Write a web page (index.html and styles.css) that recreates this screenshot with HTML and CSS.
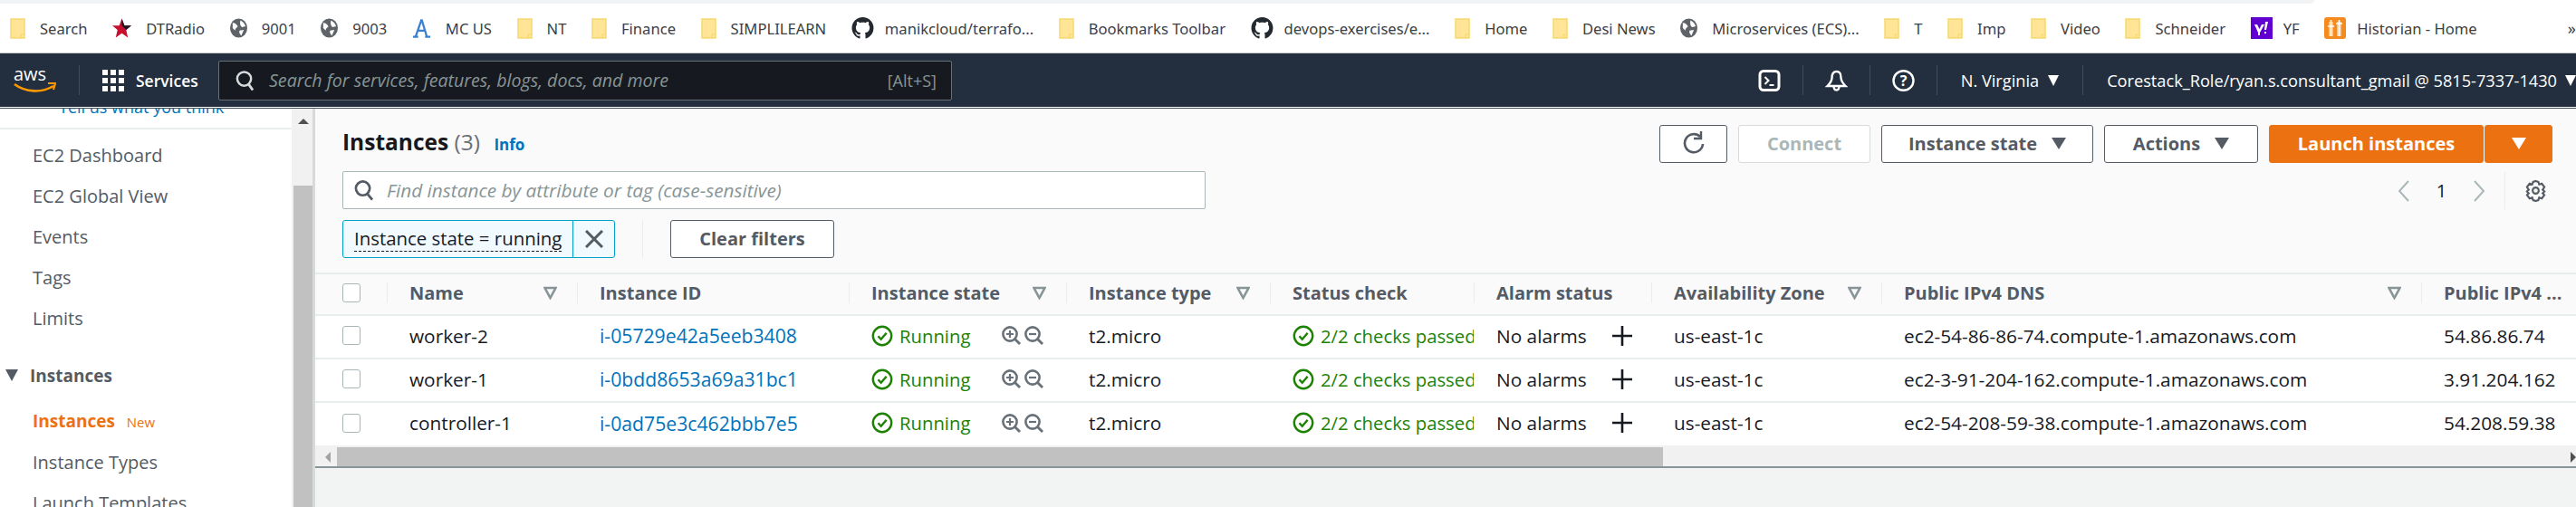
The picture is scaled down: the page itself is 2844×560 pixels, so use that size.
FILE: index.html
```html
<!DOCTYPE html>
<html lang="en">
  <head>
    <meta charset="UTF-8" />
    <title>Instances | EC2 Management Console</title>
    <link rel="stylesheet" href="styles.css">
  </head>
  <body>
    <svg class="defs" width="0" height="0">
      <symbol id="folder" viewBox="0 0 17 23">
        <path d="M1 1h15v21H1z" fill="#ffe595" stroke="#f6d76f" stroke-width="1.5"/>
        <path d="M12 22v-4h3" fill="none" stroke="#f6d76f" stroke-width="1.2"/>
      </symbol>
      <symbol id="globe" viewBox="0 0 20 22">
        <ellipse cx="10" cy="11" rx="10" ry="11" fill="#5f6368"/>
        <path d="M3 5c3 0 5 2 6 4-1 2-3 2-3 5l-3-3zM12 2c2 1 5 3 6 7l-4 1c-2-1-3-4-2-8zM11 14l5-1-3 7c-1-2-3-3-2-6z" fill="#fff"/>
      </symbol>
      <symbol id="github" viewBox="0 0 16 16">
        <path fill="#24292f" d="M8 0C3.58 0 0 3.58 0 8c0 3.54 2.29 6.53 5.47 7.59.4.07.55-.17.55-.38 0-.19-.01-.82-.01-1.49-2.01.37-2.53-.49-2.69-.94-.09-.23-.48-.94-.82-1.13-.28-.15-.68-.52-.01-.53.63-.01 1.08.58 1.23.82.72 1.21 1.87.87 2.33.66.07-.52.28-.87.51-1.07-1.78-.2-3.64-.89-3.64-3.95 0-.87.31-1.59.82-2.15-.08-.2-.36-1.02.08-2.12 0 0 .67-.21 2.2.82.64-.18 1.32-.27 2-.27.68 0 1.36.09 2 .27 1.53-1.04 2.2-.82 2.2-.82.44 1.1.16 1.92.08 2.12.51.56.82 1.27.82 2.15 0 3.07-1.87 3.75-3.65 3.95.29.25.54.73.54 1.48 0 1.07-.01 1.93-.01 2.2 0 .21.15.46.55.38A8.013 8.013 0 0016 8c0-4.42-3.58-8-8-8z"/>
      </symbol>
      <symbol id="check" viewBox="0 0 24 24">
        <circle cx="12" cy="12" r="10.2" fill="none" stroke="#1d8102" stroke-width="2.4"/>
        <path d="M7.5 12.2l3.2 3.6 6-7" fill="none" stroke="#1d8102" stroke-width="2.4"/>
      </symbol>
      <symbol id="zoomin" viewBox="0 0 21 21">
        <circle cx="9" cy="9" r="7.6" fill="none" stroke="#687078" stroke-width="2.6"/>
        <path d="M14.5 14.5l5.5 5.5" stroke="#687078" stroke-width="2.8"/>
        <path d="M5 9h8M9 5v8" stroke="#687078" stroke-width="2.2"/>
      </symbol>
      <symbol id="zoomout" viewBox="0 0 21 21">
        <circle cx="9" cy="9" r="7.6" fill="none" stroke="#687078" stroke-width="2.6"/>
        <path d="M14.5 14.5l5.5 5.5" stroke="#687078" stroke-width="2.8"/>
        <path d="M5 9h8" stroke="#687078" stroke-width="2.2"/>
      </symbol>
      <symbol id="plus" viewBox="0 0 22 22">
        <path d="M0 11h22M11 0v22" stroke="#16191f" stroke-width="2.6"/>
      </symbol>
      <symbol id="filter" viewBox="0 0 15 15">
        <path d="M1.5 2h12l-6 11z" fill="none" stroke="#879596" stroke-width="2.6"/>
      </symbol>
    </svg>

    <div class="tabstrip"><div class="tabstrip-fill"></div></div>

    <div class="bookmarks">
      <a class="bm"><svg class="bm-folder"><use href="#folder"/></svg>Search</a>
      <a class="bm"><svg class="bm-icon" viewBox="0 0 22 22"><path d="M11 0l3 8h8l-6 5 2 9-7-5-7 5 2-9-6-5h8z" fill="#c8102e"/><path d="M11 0l3 8h8l-6 5-5-5z" fill="#16191f"/></svg>DTRadio</a>
      <a class="bm"><svg class="bm-globe"><use href="#globe"/></svg>9001</a>
      <a class="bm"><svg class="bm-globe"><use href="#globe"/></svg>9003</a>
      <a class="bm"><svg class="bm-icon" viewBox="0 0 22 22"><path d="M11 1L4 21M11 1l6 20M1 21h6M15 21h6M6 14h10" fill="none" stroke="#3c7fd0" stroke-width="2.4"/></svg>MC US</a>
      <a class="bm"><svg class="bm-folder"><use href="#folder"/></svg>NT</a>
      <a class="bm"><svg class="bm-folder"><use href="#folder"/></svg>Finance</a>
      <a class="bm"><svg class="bm-folder"><use href="#folder"/></svg>SIMPLILEARN</a>
      <a class="bm"><svg class="bm-hub"><use href="#github"/></svg>manikcloud/terrafo...</a>
      <a class="bm"><svg class="bm-folder"><use href="#folder"/></svg>Bookmarks Toolbar</a>
      <a class="bm"><svg class="bm-hub"><use href="#github"/></svg>devops-exercises/e...</a>
      <a class="bm"><svg class="bm-folder"><use href="#folder"/></svg>Home</a>
      <a class="bm"><svg class="bm-folder"><use href="#folder"/></svg>Desi News</a>
      <a class="bm"><svg class="bm-globe"><use href="#globe"/></svg>Microservices (ECS)...</a>
      <a class="bm"><svg class="bm-folder"><use href="#folder"/></svg>T</a>
      <a class="bm"><svg class="bm-folder"><use href="#folder"/></svg>Imp</a>
      <a class="bm"><svg class="bm-folder"><use href="#folder"/></svg>Video</a>
      <a class="bm"><svg class="bm-folder"><use href="#folder"/></svg>Schneider</a>
      <a class="bm"><svg class="bm-icon bm-yahoo" viewBox="0 0 24 24"><rect width="24" height="24" fill="#6001d2"/><path d="M4 8h3l2.500 5L12 8h3l-5 9v3H8v-3zM16 5h3l-2 9h-2zM15 16h2v2h-2z" fill="#fff"/></svg>YF</a>
      <a class="bm"><svg class="bm-icon bm-hist" viewBox="0 0 24 24"><rect width="24" height="24" rx="3" fill="#f58a1f"/><path d="M5 5h5v16H5zM14 5h5v16h-5z" fill="#fbc27e"/><path d="M7.500 3v18M16.500 3v18M4 10h7M13 7h7" stroke="#fff" stroke-width="1.600"/></svg>Historian - Home</a>
      <span class="bm-more">»</span>
    </div>

    <header class="topnav">
      <svg class="aws-logo" viewBox="0 0 47 29">
        <text x="0" y="15" class="aws-word">aws</text>
        <path d="M1 19c12 9 30 10 43 2" fill="none" stroke="#f90" stroke-width="2.600"/>
        <path d="M38 18l8 0-2 7" fill="none" stroke="#f90" stroke-width="2.200"/>
      </svg>
      <span class="nav-sep nav-sep-logo"></span>
      <svg class="grid-icon" viewBox="0 0 24 24" fill="#fff">
        <rect width="6" height="6"/><rect x="9" width="6" height="6"/><rect x="18" width="6" height="6"/>
        <rect y="9" width="6" height="6"/><rect x="9" y="9" width="6" height="6"/><rect x="18" y="9" width="6" height="6"/>
        <rect y="18" width="6" height="6"/><rect x="9" y="18" width="6" height="6"/><rect x="18" y="18" width="6" height="6"/>
      </svg>
      <span class="services">Services</span>
      <div class="nav-search">
        <svg class="nav-search-icon" viewBox="0 0 22 24"><circle cx="10" cy="10" r="8" fill="none" stroke="#d5dbdb" stroke-width="2.600"/><path d="M15 16l5 7" stroke="#d5dbdb" stroke-width="3"/></svg>
        <span class="nav-search-text">Search for services, features, blogs, docs, and more</span>
        <span class="nav-search-key">[Alt+S]</span>
      </div>
      <div class="nav-right">
        <svg class="nav-icon" viewBox="0 0 24 24"><rect x="1.500" y="1.500" width="21" height="21" rx="4" fill="none" stroke="#fff" stroke-width="3"/><path d="M7 8l4 4-4 4M12 17h5" fill="none" stroke="#fff" stroke-width="2"/></svg>
        <span class="nav-sep"></span>
        <svg class="nav-icon" viewBox="0 0 25 24"><path d="M12.500 2c-4 0-5 3-5 7 0 4-2 6-5 9h20c-3-3-5-5-5-9 0-4-1-7-5-7zM9.500 18c0 6 6 6 6 0" fill="none" stroke="#fff" stroke-width="2.400"/></svg>
        <span class="nav-sep"></span>
        <svg class="nav-icon" viewBox="0 0 25 24"><ellipse cx="12.500" cy="12" rx="11" ry="10.800" fill="none" stroke="#fff" stroke-width="2.400"/><text x="12.500" y="18" class="help-mark">?</text></svg>
        <span class="nav-sep"></span>
        <span class="nav-text region">N. Virginia</span>
        <span class="nav-caret"></span>
        <span class="nav-sep nav-sep-acct"></span>
        <span class="nav-text account">Corestack_Role/ryan.s.consultant_gmail @ 5815-7337-1430</span>
        <span class="nav-caret nav-caret-acct"></span>
      </div>
    </header>

    <div class="rule"></div>

    <div class="console">
      <aside class="sidebar">
        <div class="side-nav">
          <div class="feedback"><a>Tell us what you think</a></div>
          <ul class="side-list">
            <li>EC2 Dashboard</li>
            <li>EC2 Global View</li>
            <li>Events</li>
            <li>Tags</li>
            <li>Limits</li>
          </ul>
          <div class="side-section"><span class="side-tri"></span>Instances</div>
          <ul class="side-list">
            <li class="active">Instances <em>New</em></li>
            <li>Instance Types</li>
            <li>Launch Templates</li>
          </ul>
        </div>
        <div class="side-scroll">
          <div class="side-arrow"></div>
          <div class="side-thumb"></div>
        </div>
      </aside>

      <main class="main">
        <section class="panel">
          <div class="panel-left">
            <h1 class="title">Instances <span class="count">(3)</span> <a class="info">Info</a></h1>
            <div class="find">
              <svg class="find-icon" viewBox="0 0 22 24"><circle cx="10" cy="10" r="8" fill="none" stroke="#545b64" stroke-width="2.800"/><path d="M15 16l6 7" stroke="#545b64" stroke-width="3"/></svg>
              <span>Find instance by attribute or tag (case-sensitive)</span>
            </div>
            <div class="filters">
              <div class="token">
                <span class="token-label">Instance state = running</span>
                <span class="token-close"><svg viewBox="0 0 20 20"><path d="M1 1l18 18M19 1L1 19" stroke="#545b64" stroke-width="3"/></svg></span>
              </div>
              <span class="filters-sep"></span>
              <button class="btn clear">Clear filters</button>
            </div>
          </div>
          <div class="panel-right">
            <div class="actions">
              <button class="btn refresh"><svg viewBox="0 0 24 26"><path d="M19 6a10 10 0 1 0 3 8" fill="none" stroke="#545b64" stroke-width="2.600"/><path d="M20 0v8h-8" fill="none" stroke="#545b64" stroke-width="2.400"/></svg></button>
              <button class="btn connect" disabled>Connect</button>
              <button class="btn state">Instance state<span class="caret"></span></button>
              <button class="btn acts">Actions<span class="caret"></span></button>
              <div class="launch">
                <button class="btn primary">Launch instances</button>
                <button class="btn primary primary-caret"><span class="caret caret-white"></span></button>
              </div>
            </div>
            <div class="pager">
              <svg class="chev" viewBox="0 0 14 24"><path d="M12 1L2 12l10 11" fill="none" stroke="#aab7b8" stroke-width="2"/></svg>
              <span class="page-num">1</span>
              <svg class="chev" viewBox="0 0 14 24"><path d="M2 1l10 11L2 23" fill="none" stroke="#aab7b8" stroke-width="2"/></svg>
              <span class="pager-sep"></span>
              <svg class="gear" viewBox="0 0 26 26"><path d="M13 2l3 1 1 3 3-1 3 4-2 3 2 2-2 2 2 2-3 4-3-1-1 3-3 1-3-1-1-3-3 1-3-4 2-2-2-2 2-2-2-3 3-4 3 1 1-3z" fill="none" stroke="#545b64" stroke-width="2.200"/><circle cx="13" cy="13" r="3.500" fill="none" stroke="#545b64" stroke-width="2.200"/></svg>
            </div>
          </div>
        </section>

        <table class="grid">
          <colgroup>
            <col class="c-check"><col class="c-name"><col class="c-id"><col class="c-state"><col class="c-type">
            <col class="c-status"><col class="c-alarm"><col class="c-az"><col class="c-dns"><col class="c-ip">
          </colgroup>
          <thead>
            <tr>
              <th class="cell-check"><span class="box"></span></th>
              <th><div class="th-in"><span>Name</span><svg class="flt"><use href="#filter"/></svg></div></th>
              <th><div class="th-in"><span>Instance ID</span></div></th>
              <th><div class="th-in"><span>Instance state</span><svg class="flt"><use href="#filter"/></svg></div></th>
              <th><div class="th-in"><span>Instance type</span><svg class="flt"><use href="#filter"/></svg></div></th>
              <th><div class="th-in"><span>Status check</span></div></th>
              <th><div class="th-in"><span>Alarm status</span></div></th>
              <th><div class="th-in"><span>Availability Zone</span><svg class="flt"><use href="#filter"/></svg></div></th>
              <th><div class="th-in"><span>Public IPv4 DNS</span><svg class="flt"><use href="#filter"/></svg></div></th>
              <th><div class="th-in"><span>Public IPv4 ...</span></div></th>
            </tr>
          </thead>
          <tbody>
            <tr>
              <td class="cell-check"><span class="box"></span></td>
              <td>worker-2</td>
              <td><a class="link">i-05729e42a5eeb3408</a></td>
              <td><div class="status"><svg class="ok"><use href="#check"/></svg><span class="green">Running</span><svg class="mag mag-first"><use href="#zoomin"/></svg><svg class="mag"><use href="#zoomout"/></svg></div></td>
              <td>t2.micro</td>
              <td><div class="status"><svg class="ok"><use href="#check"/></svg><span class="green">2/2 checks passed</span></div></td>
              <td><div class="alarm"><span>No alarms</span><svg class="plus"><use href="#plus"/></svg></div></td>
              <td>us-east-1c</td>
              <td>ec2-54-86-86-74.compute-1.amazonaws.com</td>
              <td>54.86.86.74</td>
            </tr>
            <tr>
              <td class="cell-check"><span class="box"></span></td>
              <td>worker-1</td>
              <td><a class="link">i-0bdd8653a69a31bc1</a></td>
              <td><div class="status"><svg class="ok"><use href="#check"/></svg><span class="green">Running</span><svg class="mag mag-first"><use href="#zoomin"/></svg><svg class="mag"><use href="#zoomout"/></svg></div></td>
              <td>t2.micro</td>
              <td><div class="status"><svg class="ok"><use href="#check"/></svg><span class="green">2/2 checks passed</span></div></td>
              <td><div class="alarm"><span>No alarms</span><svg class="plus"><use href="#plus"/></svg></div></td>
              <td>us-east-1c</td>
              <td>ec2-3-91-204-162.compute-1.amazonaws.com</td>
              <td>3.91.204.162</td>
            </tr>
            <tr>
              <td class="cell-check"><span class="box"></span></td>
              <td>controller-1</td>
              <td><a class="link">i-0ad75e3c462bbb7e5</a></td>
              <td><div class="status"><svg class="ok"><use href="#check"/></svg><span class="green">Running</span><svg class="mag mag-first"><use href="#zoomin"/></svg><svg class="mag"><use href="#zoomout"/></svg></div></td>
              <td>t2.micro</td>
              <td><div class="status"><svg class="ok"><use href="#check"/></svg><span class="green">2/2 checks passed</span></div></td>
              <td><div class="alarm"><span>No alarms</span><svg class="plus"><use href="#plus"/></svg></div></td>
              <td>us-east-1c</td>
              <td>ec2-54-208-59-38.compute-1.amazonaws.com</td>
              <td>54.208.59.38</td>
            </tr>
          </tbody>
        </table>

        <div class="hscroll">
          <span class="hs-arrow hs-left"></span>
          <div class="hs-thumb"></div>
          <span class="hs-arrow hs-right"></span>
        </div>
        <div class="footer-space"></div>
      </main>
    </div>
  </body>
</html>
```

FILE: styles.css
```css
* {
  box-sizing: border-box;
}

html,
body {
  margin: 0;
  height: 560px;
  overflow: hidden;
}

body {
  display: flex;
  flex-direction: column;
  font-family: "Open Sans", "Noto Sans", sans-serif;
  font-size: 20px;
  color: #16191f;
  background-color: #fff;
}

.defs {
  display: block;
  height: 0;
}

/* browser chrome */

.tabstrip {
  height: 4px;
  flex: none;
  background-color: #fff;
}

.tabstrip-fill {
  width: 2555px;
  height: 4px;
  background-color: #f1f3f4;
  border-radius: 0 0 8px 0;
}

.bookmarks {
  height: 55px;
  flex: none;
  display: flex;
  align-items: center;
  gap: 27.6px;
  padding-left: 11px;
  background-color: #fff;
  border-bottom: 1px solid #ccc;
  font-family: "Noto Sans", sans-serif;
  font-size: 16.6px;
  color: #3c4043;
  white-space: nowrap;
}

.bm {
  display: flex;
  align-items: center;
  gap: 16px;
}

.bm-folder {
  width: 17px;
  height: 23px;
}

.bm-globe {
  width: 19px;
  height: 22px;
}

.bm-hub {
  width: 25px;
  height: 24px;
  margin-right: -4px;
}

.bm-icon {
  width: 21px;
  height: 22px;
}

.bm-yahoo,
.bm-hist {
  width: 24px;
  height: 24px;
  margin-right: -4px;
}

.bm-more {
  margin-left: auto;
  margin-right: 0;
  font-size: 18px;
}

/* aws nav */

.topnav {
  height: 59px;
  flex: none;
  display: flex;
  align-items: center;
  background-color: #232f3e;
  color: #fff;
  padding-left: 15px;
}

.aws-logo {
  width: 47px;
  height: 29px;
}

.aws-word {
  font-family: "Open Sans", sans-serif;
  font-size: 20px;
  fill: #fff;
}

.nav-sep {
  width: 1px;
  height: 33px;
  flex: none;
  background-color: #414d5c;
}

.nav-sep-logo {
  margin-left: 25px;
}

.grid-icon {
  width: 24px;
  height: 24px;
  margin-left: 25px;
}

.services {
  width: 66px;
  margin-left: 13px;
  font-size: 17.5px;
  font-weight: 600;
  white-space: nowrap;
}

.nav-search {
  width: 810px;
  height: 44px;
  margin-left: 25px;
  display: flex;
  align-items: center;
  padding: 0 16px 0 18px;
  background-color: #16191f;
  border: 1px solid #687078;
  border-radius: 2px;
  color: #879596;
  font-size: 19.6px;
}

.nav-search-icon {
  width: 21px;
  height: 24px;
  flex: none;
}

.nav-search-text {
  margin-left: 16px;
  font-style: italic;
}

.nav-search-key {
  margin-left: auto;
  font-size: 18px;
}

.nav-right {
  margin-left: auto;
  display: flex;
  align-items: center;
}

.nav-icon {
  width: 25px;
  height: 24px;
  flex: none;
  margin: 0 24px;
}

.help-mark {
  font-family: "Open Sans", sans-serif;
  font-size: 16px;
  font-weight: 700;
  fill: #fff;
  text-anchor: middle;
}

.nav-text {
  font-size: 18.2px;
  white-space: nowrap;
}

.region {
  margin-left: 26px;
}

.nav-caret {
  width: 0;
  height: 0;
  margin-left: 10px;
  border-left: 6px solid transparent;
  border-right: 6px solid transparent;
  border-top: 12px solid #fff;
}

.nav-sep-acct {
  margin-left: 26px;
  margin-right: 26px;
}

.nav-caret-acct {
  margin-left: 9px;
}

.rule {
  height: 2px;
  flex: none;
  background-color: #fff;
  border-bottom: 1px solid #414d5c;
}

/* sidebar */

.console {
  flex: 1;
  display: flex;
  min-height: 0;
}

.sidebar {
  width: 348px;
  flex: none;
  display: flex;
  background-color: #fff;
  border-right: 3px solid #d5dbdb;
}

.side-nav {
  width: 322px;
  flex: none;
  overflow: hidden;
  color: #545b64;
}

.feedback {
  height: 23px;
  overflow: hidden;
  border-bottom: 2px solid #eaeded;
  padding-left: 65px;
  color: #0073bb;
  font-size: 18px;
  line-height: 22px;
}

.feedback a {
  display: block;
  margin-top: -13px;
}

.side-list {
  list-style-type: none;
  margin: 0;
  padding: 6px 0 0 36px;
}

.side-list li {
  height: 45px;
  line-height: 45px;
  white-space: nowrap;
}

.side-list .active {
  color: #ec7211;
  font-size: 19px;
  font-weight: 700;
}

.side-list em {
  margin-left: 8px;
  font-style: normal;
  font-weight: 400;
  font-size: 15px;
}

.side-section {
  margin-top: 18px;
  padding-left: 6px;
  height: 45px;
  display: flex;
  align-items: center;
  gap: 13px;
  font-size: 19px;
  font-weight: 700;
}

.side-tri {
  width: 0;
  height: 0;
  border-left: 7px solid transparent;
  border-right: 7px solid transparent;
  border-top: 13px solid #545b64;
}

.side-scroll {
  flex: 1;
  background-color: #f1f1f1;
  padding-left: 2px;
}

.side-arrow {
  width: 0;
  height: 0;
  margin: 11px 0 0 5px;
  border-left: 6px solid transparent;
  border-right: 6px solid transparent;
  border-bottom: 6px solid #505050;
}

.side-thumb {
  height: 360px;
  margin-top: 68px;
  background-color: #c1c1c1;
}

/* main area */

.main {
  flex: 1;
  min-width: 0;
  display: flex;
  flex-direction: column;
  background-color: #fafafa;
}

.panel {
  height: 181px;
  flex: none;
  display: flex;
  justify-content: space-between;
  padding: 18px 26px 0 30px;
}

.title {
  margin: 0;
  height: 38px;
  line-height: 38px;
  font-size: 24.5px;
  font-weight: 700;
  color: #16191f;
}

.count {
  font-weight: 400;
  color: #687078;
}

.info {
  margin-left: 9px;
  font-size: 17px;
  color: #0073bb;
}

.find {
  width: 953px;
  height: 42px;
  margin-top: 13px;
  display: flex;
  align-items: center;
  gap: 15px;
  padding-left: 12px;
  background-color: #fff;
  border: 1px solid #aab7b8;
  border-radius: 2px;
  color: #879596;
  font-size: 20.8px;
  font-style: italic;
}

.find-icon {
  width: 21px;
  height: 24px;
  flex: none;
}

.filters {
  display: flex;
  align-items: center;
  margin-top: 12px;
}

.token {
  width: 301px;
  height: 42px;
  display: flex;
  background-color: #f1faff;
  border: 1px solid #00a1c9;
  border-radius: 3px;
}

.token-label {
  flex: 1;
  padding-left: 12px;
  line-height: 38px;
  font-size: 20.4px;
  white-space: nowrap;
  overflow: hidden;
  text-decoration: underline dashed 1px;
  text-underline-offset: 6px;
}

.token-close {
  width: 46px;
  flex: none;
  display: flex;
  align-items: center;
  justify-content: center;
  border-left: 1px solid #00a1c9;
}

.token-close svg {
  width: 20px;
  height: 20px;
}

.filters-sep {
  width: 1px;
  height: 42px;
  margin: 0 30px;
  background-color: #eaeded;
}

.btn {
  height: 42px;
  display: flex;
  align-items: center;
  justify-content: center;
  padding: 0 0 2px;
  background-color: #fff;
  border: 1px solid #545b64;
  border-radius: 3px;
  color: #545b64;
  font-family: inherit;
  font-size: 20px;
  font-weight: 700;
  white-space: nowrap;
}

.clear {
  width: 181px;
}

.panel-right {
  display: flex;
  flex-direction: column;
  align-items: flex-end;
}

.actions {
  display: flex;
  gap: 12px;
}

.refresh {
  width: 75px;
}

.refresh svg {
  width: 24px;
  height: 28px;
}

.connect {
  width: 146px;
  border-color: #d5dbdb;
  color: #aab7b8;
}

.state {
  width: 234px;
}

.acts {
  width: 170px;
}

.caret {
  width: 0;
  height: 0;
  margin-left: 16px;
  border-left: 8px solid transparent;
  border-right: 8px solid transparent;
  border-top: 13px solid #545b64;
}

.caret-white {
  margin-left: 0;
  border-top-color: #fff;
}

.launch {
  display: flex;
  gap: 1px;
}

.primary {
  width: 237px;
  background-color: #ec7211;
  border-color: #ec7211;
  color: #fff;
}

.primary-caret {
  width: 75px;
}

.pager {
  height: 41px;
  margin-top: 10px;
  display: flex;
  align-items: center;
}

.chev {
  width: 14px;
  height: 24px;
}

.page-num {
  width: 69px;
  text-align: center;
  color: #16191f;
  font-size: 20px;
}

.pager-sep {
  width: 1px;
  height: 41px;
  margin: 0 21px 0 21px;
  background-color: #eaeded;
}

.gear {
  width: 25px;
  height: 25px;
  margin-right: 6px;
}

/* table */

.grid {
  width: 2496px;
  flex: none;
  table-layout: fixed;
  border-collapse: collapse;
  background-color: #fff;
}

.c-check { width: 79px; }
.c-name { width: 210px; }
.c-id { width: 300px; }
.c-state { width: 240px; }
.c-type { width: 225px; }
.c-status { width: 225px; }
.c-alarm { width: 196px; }
.c-az { width: 254px; }
.c-dns { width: 596px; }
.c-ip { width: 171px; }

th,
td {
  padding: 0 0 3px;
  text-align: left;
  white-space: nowrap;
  overflow: hidden;
  font-size: 20.8px;
}

th {
  height: 46px;
  background-color: #fafafa;
  border-top: 2px solid #eaeded;
  color: #545b64;
  font-size: 20px;
  font-weight: 700;
}

td {
  height: 48px;
  padding-left: 25px;
  border-top: 2px solid #eaeded;
}

.th-in {
  height: 23px;
  display: flex;
  align-items: center;
  justify-content: space-between;
  padding: 0 22px 0 24px;
  border-left: 1px solid #eaeded;
}

td.cell-check,
th.cell-check {
  padding-left: 30px;
}

.box {
  display: block;
  width: 20px;
  height: 21px;
  background-color: #fff;
  border: 1px solid #aab7b8;
  border-radius: 3px;
}

.flt {
  width: 15px;
  height: 15px;
  flex: none;
}

.link {
  color: #0073bb;
  font-size: 21.2px;
}

.status {
  display: flex;
  align-items: center;
}

.ok {
  width: 24px;
  height: 24px;
  flex: none;
  margin-right: 7px;
}

.green {
  color: #1d8102;
  font-size: 20.3px;
}

.mag {
  width: 21px;
  height: 21px;
  flex: none;
  margin-left: 4px;
}

.mag-first {
  margin-left: 35px;
}

.alarm {
  display: flex;
  align-items: center;
}

.plus {
  width: 22px;
  height: 22px;
  margin-left: 28px;
}

.hscroll {
  height: 23px;
  flex: none;
  display: flex;
  align-items: flex-end;
  background-color: #f1f1f1;
  padding: 2px 0 0 24px;
}

.hs-thumb {
  width: 1464px;
  height: 21px;
  background-color: #c1c1c1;
}

.hs-arrow {
  width: 0;
  height: 0;
  border-top: 6px solid transparent;
  border-bottom: 6px solid transparent;
}

.hs-left {
  margin: 0 0 4px -13px;
  margin-right: 7px;
  border-right: 6px solid #a3a3a3;
}

.hs-right {
  margin: 0 0 4px auto;
  border-left: 6px solid #505050;
}

.footer-space {
  flex: 1;
  background-color: #f2f3f3;
  border-top: 2px solid #879596;
}
```
